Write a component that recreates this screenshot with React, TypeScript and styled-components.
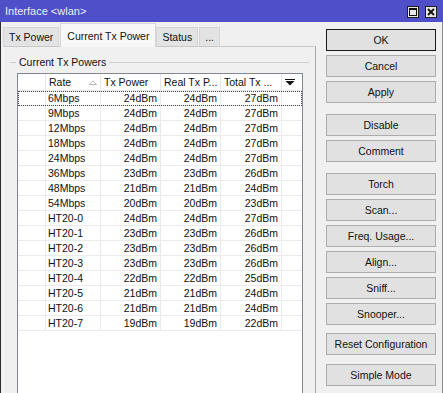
import React from "react";
import styled, { createGlobalStyle } from "styled-components";

const GlobalStyle = createGlobalStyle`
  html, body {
    margin: 0;
    padding: 0;
    background: #f0f0f0;
  }
  body {
    font-family: "Liberation Sans", Arial, sans-serif;
    font-size: 10.5px;
    color: #000;
  }
`;

const Window = styled.div`
  width: 443px;
  height: 393px;
  display: flex;
  flex-direction: column;
  overflow: hidden;
  background: #f0f0f0;
`;

const TitleBar = styled.div`
  height: 22px;
  flex: none;
  background: #4f4fc9;
  color: #ececf8;
  font-size: 11px;
  display: flex;
  align-items: center;
  justify-content: space-between;
  padding: 0 6px 0 5px;
  box-sizing: border-box;
`;

const TitleButtons = styled.div`
  display: flex;
  gap: 6px;
  margin-top: 2px;
`;

const TitleButton = styled.div`
  width: 12px;
  height: 12px;
  box-sizing: border-box;
  border: 1px solid #1e1e1e;
  background: #e8e8e8;
  display: flex;
  align-items: center;
  justify-content: center;
`;

const Body = styled.div`
  flex: 1;
  min-height: 0;
  display: flex;
  border-left: 1px solid #2e2e2e;
  border-right: 1px solid #8c8c8c;
`;

const LeftPane = styled.div`
  width: 313px;
  flex: none;
  display: flex;
  flex-direction: column;
  padding-left: 2px;
`;

const TabStrip = styled.div`
  height: 24px;
  flex: none;
  display: flex;
  align-items: flex-end;
  position: relative;
  z-index: 1;
`;

const Tab = styled.div<{ $active?: boolean }>`
  height: ${(p) => (p.$active ? 24 : 20)}px;
  box-sizing: border-box;
  padding: 0 ${(p) => (p.$active ? 6 : 5)}px;
  margin-bottom: -1px;
  display: flex;
  align-items: center;
  background: ${(p) => (p.$active ? "#f7f7f7" : "#e3e3e3")};
  border: 1px solid #d6d6d6;
  border-bottom: ${(p) => (p.$active ? "none" : "1px solid #c8c8c8")};
  margin-right: ${(p) => (p.$active ? 0 : 1)}px;
  color: #111;
`;

const TabPanel = styled.div`
  flex: 1;
  min-height: 0;
  display: flex;
  flex-direction: column;
  border-top: 1px solid #c8c8c8;
  border-right: 1px solid #a8a8a8;
  border-left: 1px solid #fafafa;
  padding: 8px 6px 0 6px;
`;

const GroupHeader = styled.div`
  display: flex;
  align-items: center;
  height: 14px;
  color: #111;
`;

const GroupLine = styled.div<{ $grow?: boolean }>`
  height: 1px;
  background: #cfcfcf;
  width: 6px;
  flex: ${(p) => (p.$grow ? 1 : "none")};
`;

const GroupLabel = styled.span`
  padding: 0 3px;
  white-space: nowrap;
`;

const ListView = styled.div`
  flex: 1;
  margin: 4px 6px 0 7px;
  background: #fff;
  border: 1px solid #828790;
  border-bottom: none;
`;

const COLS = "28px 55px 60px 60px 61px 1fr";

const HeaderRow = styled.div`
  display: grid;
  grid-template-columns: ${COLS};
  height: 17px;
`;

const HeaderCell = styled.div<{ $last?: boolean }>`
  box-sizing: border-box;
  border-bottom: 1px solid #e5e5e5;
  border-right: ${(p) => (p.$last ? "none" : "1px solid #e5e5e5")};
  padding: 0 3px;
  line-height: 15px;
  white-space: nowrap;
  overflow: hidden;
  display: flex;
  align-items: center;
  justify-content: space-between;
  color: #111;
`;

const Row = styled.div<{ $focused?: boolean }>`
  display: grid;
  grid-template-columns: ${COLS};
  height: 15px;
  outline: ${(p) => (p.$focused ? "1px dotted #444" : "none")};
  outline-offset: -1px;
`;

const Cell = styled.div<{ $num?: boolean; $last?: boolean }>`
  box-sizing: border-box;
  border-bottom: 1px solid #ebebeb;
  border-right: ${(p) => (p.$last ? "none" : "1px solid #ebebeb")};
  padding: 0 ${(p) => (p.$num ? 3 : 2)}px;
  line-height: 14px;
  text-align: ${(p) => (p.$num ? "right" : "left")};
  white-space: nowrap;
  color: #111;
`;

const ButtonColumn = styled.div`
  flex: 1;
  display: flex;
  flex-direction: column;
  padding: 7px 6px 0 10px;
`;

const Button = styled.div<{ $default?: boolean; $gap?: number }>`
  height: 22px;
  box-sizing: border-box;
  margin-top: ${(p) => p.$gap ?? 4}px;
  background: #e1e1e1;
  border: 1px solid ${(p) => (p.$default ? "#1a1a1a" : "#adadad")};
  display: flex;
  align-items: center;
  justify-content: center;
  color: #111;
`;

const rows: [string, number, number, number][] = [
  ["6Mbps", 24, 24, 27],
  ["9Mbps", 24, 24, 27],
  ["12Mbps", 24, 24, 27],
  ["18Mbps", 24, 24, 27],
  ["24Mbps", 24, 24, 27],
  ["36Mbps", 23, 23, 26],
  ["48Mbps", 21, 21, 24],
  ["54Mbps", 20, 20, 23],
  ["HT20-0", 24, 24, 27],
  ["HT20-1", 23, 23, 26],
  ["HT20-2", 23, 23, 26],
  ["HT20-3", 23, 23, 26],
  ["HT20-4", 22, 22, 25],
  ["HT20-5", 21, 21, 24],
  ["HT20-6", 21, 21, 24],
  ["HT20-7", 19, 19, 22],
];

const buttons: [string, number][] = [
  ["OK", 0],
  ["Cancel", 4],
  ["Apply", 4],
  ["Disable", 11],
  ["Comment", 4],
  ["Torch", 11],
  ["Scan...", 4],
  ["Freq. Usage...", 4],
  ["Align...", 4],
  ["Sniff...", 4],
  ["Snooper...", 4],
  ["Reset Configuration", 8],
  ["Simple Mode", 9],
];

const SortArrow = () => (
  <svg width="8" height="5" viewBox="0 0 8 5">
    <path d="M0.5 4.5 L4 0.8 L7.5 4.5 Z" fill="none" stroke="#b4b4b4" strokeWidth="1" />
  </svg>
);

const MenuArrow = () => (
  <svg width="10" height="7" viewBox="0 0 10 7">
    <rect x="0" y="0" width="10" height="1" fill="#111" />
    <path d="M0.5 2 L9.5 2 L5 6.5 Z" fill="#111" />
  </svg>
);

const MaxIcon = () => (
  <svg width="8" height="8" viewBox="0 0 8 8">
    <rect x="0.5" y="0.5" width="7" height="7" fill="none" stroke="#111" strokeWidth="1" />
    <rect x="0" y="0" width="8" height="2" fill="#111" />
  </svg>
);

const CloseIcon = () => (
  <svg width="8" height="8" viewBox="0 0 8 8">
    <path d="M1 1 L7 7 M7 1 L1 7" stroke="#111" strokeWidth="1.8" />
  </svg>
);

const App: React.FC = () => {
  return (
    <Window>
      <GlobalStyle />
      <TitleBar>
        <span>Interface &lt;wlan&gt;</span>
        <TitleButtons>
          <TitleButton>
            <MaxIcon />
          </TitleButton>
          <TitleButton>
            <CloseIcon />
          </TitleButton>
        </TitleButtons>
      </TitleBar>
      <Body>
        <LeftPane>
          <TabStrip>
            <Tab>Tx Power</Tab>
            <Tab $active>Current Tx Power</Tab>
            <Tab>Status</Tab>
            <Tab>...</Tab>
          </TabStrip>
          <TabPanel>
            <GroupHeader>
              <GroupLine />
              <GroupLabel>Current Tx Powers</GroupLabel>
              <GroupLine $grow />
            </GroupHeader>
            <ListView>
              <HeaderRow>
                <HeaderCell />
                <HeaderCell>
                  Rate
                  <SortArrow />
                </HeaderCell>
                <HeaderCell>Tx Power</HeaderCell>
                <HeaderCell>Real Tx P...</HeaderCell>
                <HeaderCell>Total Tx ...</HeaderCell>
                <HeaderCell $last>
                  <MenuArrow />
                </HeaderCell>
              </HeaderRow>
              {rows.map(([rate, tx, real, total], i) => (
                <Row key={rate} $focused={i === 0}>
                  <Cell />
                  <Cell>{rate}</Cell>
                  <Cell $num>{tx}dBm</Cell>
                  <Cell $num>{real}dBm</Cell>
                  <Cell $num>{total}dBm</Cell>
                  <Cell $last />
                </Row>
              ))}
            </ListView>
          </TabPanel>
        </LeftPane>
        <ButtonColumn>
          {buttons.map(([label, gap], i) => (
            <Button key={label} $default={i === 0} $gap={gap}>
              {label}
            </Button>
          ))}
        </ButtonColumn>
      </Body>
    </Window>
  );
};

export default App;
